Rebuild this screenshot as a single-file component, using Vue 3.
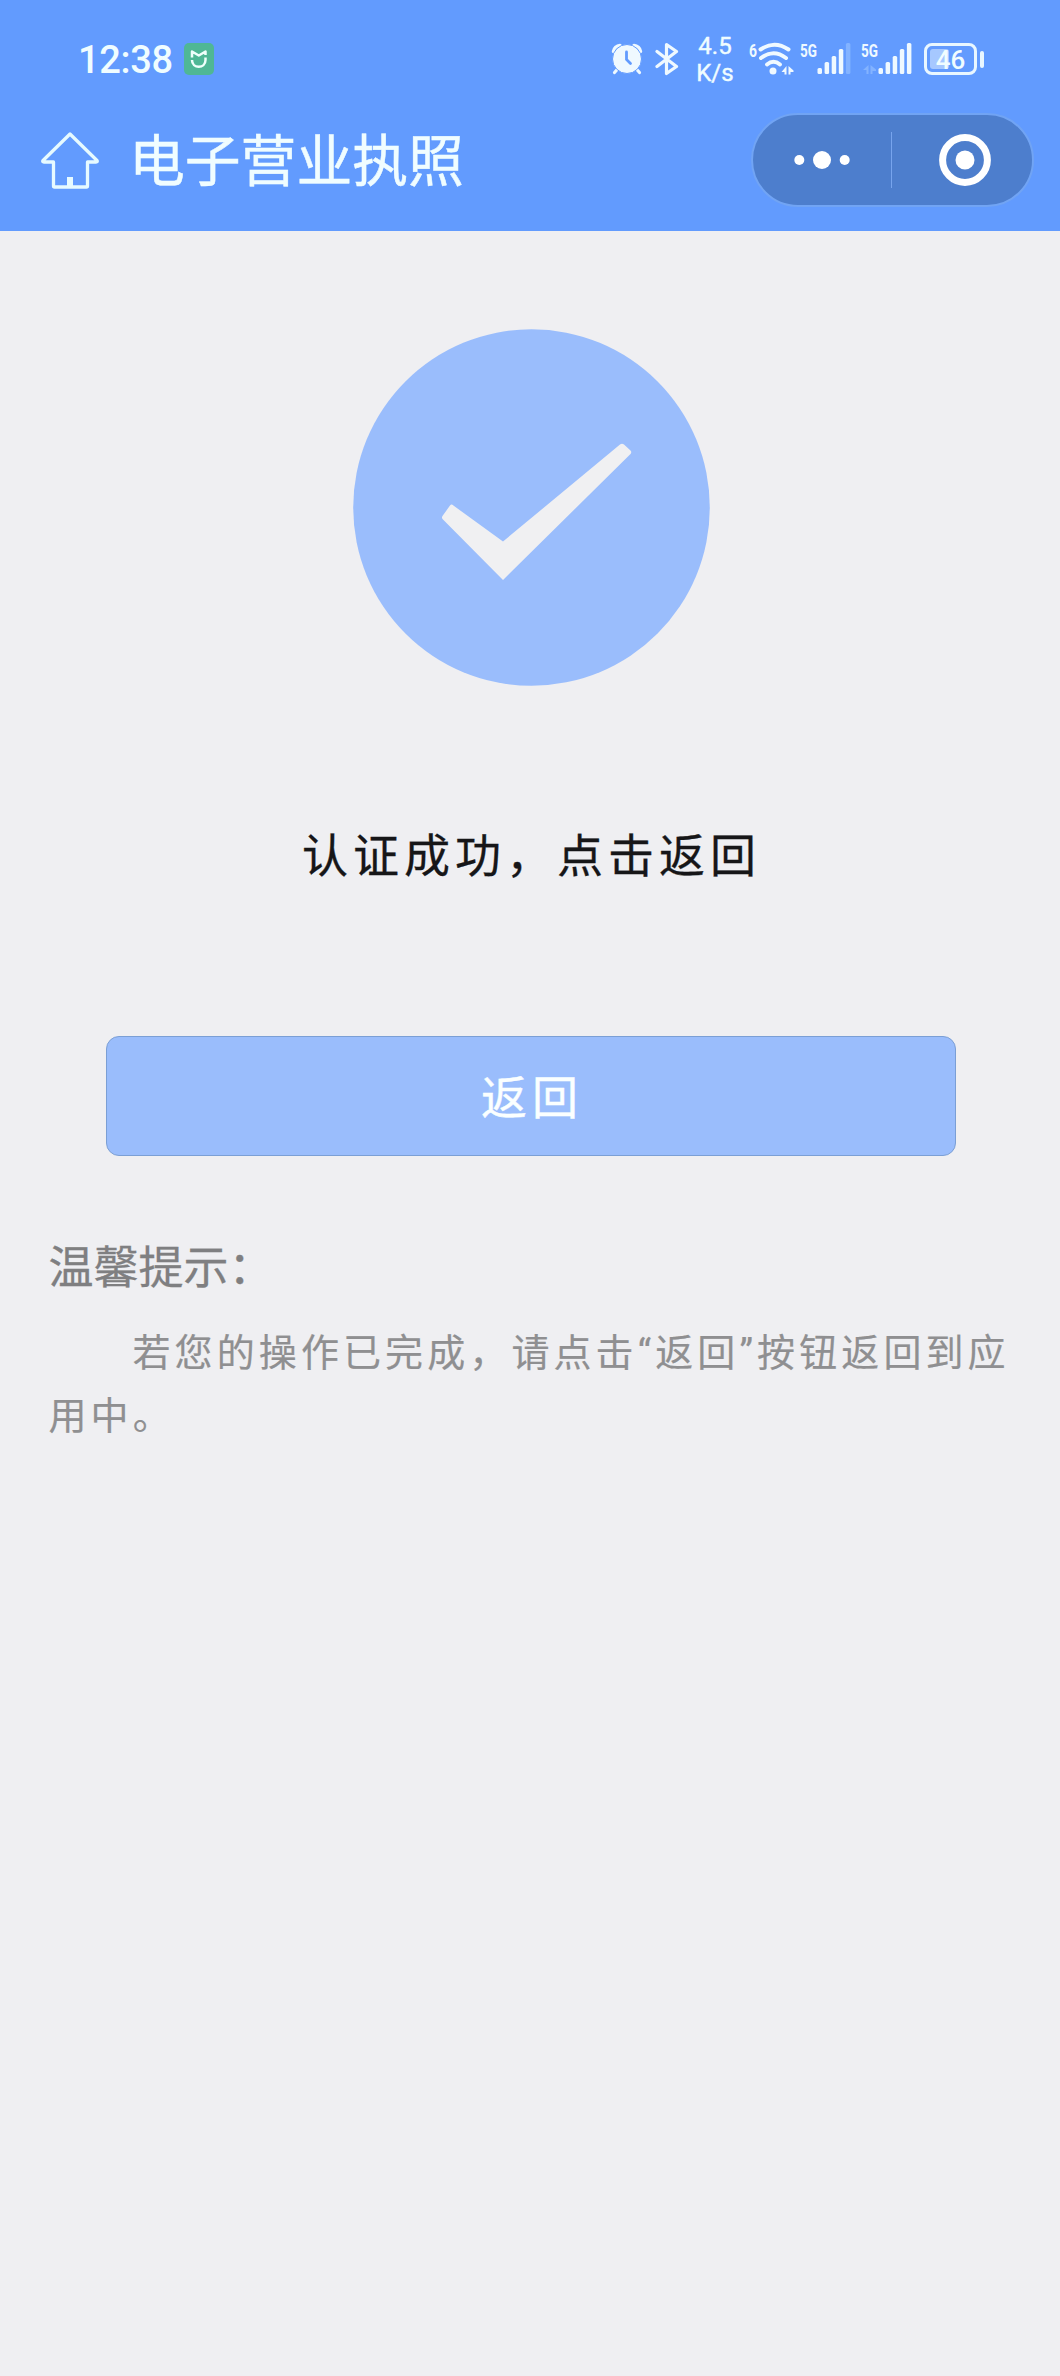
<script setup>
import { ref } from 'vue';

const time = ref('12:38');
const speed = ref({ value: '4.5', unit: 'K/s' });
const battery = ref(46);
const signals = [
    { label: '5G', level: 4, data: false },
    { label: '5G', level: 5, data: true }
];
const barHeights = [6, 12, 18, 25, 31];
</script>

<template>
    <div class="page">
        <header class="header">
            <div class="status-bar">
                <span class="time">{{ time }}</span>
                <svg class="mi" width="30" height="32" viewBox="0 0 30 32">
                    <rect width="30" height="32" rx="5" fill="#4fb795" />
                    <path d="M8 14.500V8.500L14.800 12.500L21.500 8.500V12M8 17C8 26 21.500 26 21.500 17V14.500" fill="none" stroke="#effffb" stroke-width="2.500" stroke-linejoin="round" />
                </svg>
                <svg class="alarm" width="32" height="32" viewBox="0 0 32 32">
                    <path d="M2.500 8.500A7 7 0 0 1 9 2.500M23 2.500A7 7 0 0 1 29.500 8.500" fill="none" stroke="#eff9ff" stroke-width="3.500" stroke-linecap="round" />
                    <path d="M7.500 25L3.500 29.500M24.500 25L28.500 29.500" stroke="#eff9ff" stroke-width="3.200" stroke-linecap="round" />
                    <circle cx="16" cy="16" r="14.500" fill="#eff9ff" stroke="#629bfe" stroke-width="1" />
                    <path d="M15.500 9V16.500L19.500 20.500" fill="none" stroke="#629bfe" stroke-width="2.800" stroke-linecap="round" />
                </svg>
                <svg class="bluetooth" width="24" height="34" viewBox="0 0 24 34">
                    <path d="M2 9.500L21.500 24.500L11.500 31.500V2.500L21.500 9.500L2 24.500" fill="none" stroke="#eff9ff" stroke-width="3.200" stroke-linejoin="round" stroke-linecap="round" />
                </svg>
                <div class="speed">
                    <span>{{ speed.value }}</span>
                    <span>{{ speed.unit }}</span>
                </div>
                <svg class="wifi" width="44" height="36" viewBox="0 0 44 36">
                    <text x="0" y="15.500" class="mini-text" textLength="8" lengthAdjust="spacingAndGlyphs">6</text>
                    <g fill="none" stroke="#eff9ff" stroke-width="4" stroke-linecap="round">
                        <path d="M11.500 8.500Q25.500 -1 39.500 8.500" />
                        <path d="M12 17Q24.500 7.500 37 17" />
                        <path d="M18 23.500Q24.500 18 31 23.500" />
                    </g>
                    <circle cx="24" cy="30" r="3.500" fill="#eff9ff" />
                    <path d="M37.500 25V33.500H35.500V31H32.500ZM39.500 25L44.500 29.500V31H41.500V33.500H39.500Z" fill="#eff9ff" />
                </svg>
                <svg v-for="(sim, i) in signals" :key="i" class="signal" width="51" height="36" viewBox="0 0 51 36">
                    <text x="0" y="16" class="mini-text" textLength="17" lengthAdjust="spacingAndGlyphs">{{ sim.label }}</text>
                    <path v-if="sim.data" d="M7.500 24V33H5.500V29H2ZM9.500 24L15 28.500V30H11.500V33H9.500Z" fill="#83b3ff" />
                    <rect
                        v-for="(h, n) in barHeights"
                        :key="n"
                        :x="17.500 + n * 7.100"
                        :y="33 - h"
                        width="4.500"
                        :height="h"
                        rx="1.500"
                        :fill="n < sim.level ? '#eff9ff' : '#83b3ff'"
                    />
                </svg>
                <div class="battery">
                    <div class="battery-body">
                        <div class="battery-fill" :style="{ width: battery + '%' }"></div>
                        <span class="battery-text">{{ battery }}</span>
                    </div>
                    <div class="battery-cap"></div>
                </div>
            </div>
            <div class="nav-bar">
                <svg class="home" width="60" height="58" viewBox="0 0 60 58">
                    <path d="M30 3L57 29.500Q58 31 56 31H47.500V55Q47.500 56 46.500 56H14.500Q13.500 56 13.500 55V31H4Q2 31 3 29.500Z" fill="none" stroke="#e6faff" stroke-width="3.300" stroke-linejoin="round" />
                    <rect x="27" y="46" width="6" height="9" fill="#e6faff" />
                </svg>
                <h1 class="title">电子营业执照</h1>
                <div class="capsule">
                    <button class="capsule-btn" aria-label="menu">
                        <svg width="56" height="18" viewBox="0 0 56 18">
                            <circle cx="5.300" cy="9" r="5" fill="#fff" />
                            <circle cx="28" cy="9" r="9" fill="#fff" />
                            <circle cx="50.700" cy="9" r="5" fill="#fff" />
                        </svg>
                    </button>
                    <span class="capsule-line"></span>
                    <button class="capsule-btn close" aria-label="close">
                        <svg width="52" height="52" viewBox="0 0 52 52">
                            <circle cx="26" cy="26" r="22.400" fill="none" stroke="#fff" stroke-width="7" />
                            <circle cx="26" cy="26" r="9.500" fill="#fff" />
                        </svg>
                    </button>
                </div>
            </div>
        </header>
        <main class="content">
            <svg class="success" width="357" height="357" viewBox="0 0 357 357">
                <circle cx="178.500" cy="178.500" r="178.300" fill="#9abdfc" />
                <path d="M99 175.500L150 212.500L267 115.500Q269 114 271 115.500L277.500 121.500Q279 123 277.500 125L150 251L89.500 190Q88.500 188.500 89.500 187L97 176.500Q98 175 99 175.500Z" fill="#f0f0f2" />
            </svg>
            <p class="message">认证成功，点击返回</p>
            <button class="back-btn">返回</button>
            <section class="tips">
                <h2>温馨提示：</h2>
                <p>若您的操作已完成，请点击“返回”按钮返回到应用中。</p>
            </section>
        </main>
    </div>
</template>

<style>
body {
    background-color: #efeff2;
}
</style>

<style scoped>
.page {
    width: 100%;
    min-height: 2376px;
    background-color: #efeff2;
    font-family: "Noto Sans CJK SC", sans-serif;
}

.header {
    height: 231px;
    background-color: #629bfe;
    color: #f0fdff;
}

.status-bar {
    height: 118px;
    padding: 0 76px 0 78px;
    box-sizing: border-box;
    display: flex;
    align-items: center;
    font-family: Roboto, sans-serif;
}

.time {
    width: 106px;
    padding-top: 2px;
    font-size: 38px;
    font-weight: 500;
    line-height: 44px;
    letter-spacing: -0.3px;
    white-space: nowrap;
}

.alarm {
    margin-left: auto;
}

.bluetooth {
    margin-left: 12px;
}

.speed {
    width: 40px;
    margin-left: 16px;
    padding-top: 1px;
    display: flex;
    flex-direction: column;
    align-items: center;
    font-size: 24px;
    line-height: 27px;
    -webkit-text-stroke: 0.4px currentColor;
}

.wifi {
    margin-left: 14px;
    overflow: visible;
}

.mini-text {
    font-family: Roboto, sans-serif;
    font-size: 18px;
    font-weight: 700;
    fill: #eff9ff;
}

.signal {
    margin-left: 7px;
    overflow: visible;
}

.signal + .signal {
    margin-left: 10px;
}

.battery {
    margin-left: 12px;
    display: flex;
    align-items: center;
    gap: 3px;
}

.battery-body {
    position: relative;
    width: 53px;
    height: 32px;
    padding: 3px;
    box-sizing: border-box;
    border: 3px solid #e9f7ff;
    border-radius: 8px;
}

.battery-fill {
    height: 100%;
    border-radius: 3px;
    background-color: #a6c8ff;
}

.battery-text {
    position: absolute;
    inset: 0;
    font-size: 26px;
    font-weight: 500;
    line-height: 28px;
    text-align: center;
}

.battery-cap {
    width: 4px;
    height: 17px;
    border-radius: 2px;
    background-color: #e9f7ff;
}

.nav-bar {
    height: 84px;
    padding: 0 26px 0 40px;
    display: flex;
    align-items: center;
}

.title {
    margin: 0 0 6px 29px;
    font-size: 55.8px;
    font-weight: 400;
    line-height: 78px;
    -webkit-text-stroke: 0.5px currentColor;
}

.capsule {
    width: 283px;
    height: 94px;
    margin-left: auto;
    box-sizing: border-box;
    border: 2px solid #71a4f4;
    border-radius: 47px;
    background-color: #4d7ecd;
    display: flex;
    align-items: center;
}

.capsule-btn {
    width: 138px;
    padding: 0;
    border: 0;
    background: none;
    display: flex;
    justify-content: center;
}

.capsule-btn.close {
    width: 140px;
    padding-left: 6px;
}

.capsule-line {
    width: 1px;
    height: 56px;
    background-color: #77a4ed;
}

.content {
    display: flex;
    flex-direction: column;
    align-items: center;
}

.success {
    margin: 98px 0 0 2px;
}

.message {
    margin: 131px 0 0 3px;
    font-size: 46px;
    line-height: 70px;
    letter-spacing: 5px;
    color: #161618;
    -webkit-text-stroke: 0.3px currentColor;
}

.back-btn {
    width: 850px;
    height: 120px;
    margin: 149px 0 0 2px;
    padding: 0 0 4px 2px;
    border: 1px solid #7b9fd5;
    border-radius: 13px;
    background-color: #9abdfc;
    color: #fbffff;
    font-family: inherit;
    font-size: 46px;
    letter-spacing: 5px;
    -webkit-text-stroke: 0.4px currentColor;
}

.tips {
    width: 964px;
    margin: 75px 0 0 1px;
    color: #8f8f91;
}

.tips h2 {
    margin: 0;
    font-size: 45px;
    font-weight: 400;
    line-height: 68px;
    color: #7f7f81;
    -webkit-text-stroke: 0.3px currentColor;
}

/* Roboto only supplies the narrow curly quotes here */
.tips p {
    margin: 23px 0 0;
    font-family: Roboto, "Noto Sans CJK SC", sans-serif;
    font-size: 38px;
    line-height: 63px;
    letter-spacing: 4.1px;
    text-indent: 84px;
    -webkit-text-stroke: 0.2px currentColor;
}
</style>
